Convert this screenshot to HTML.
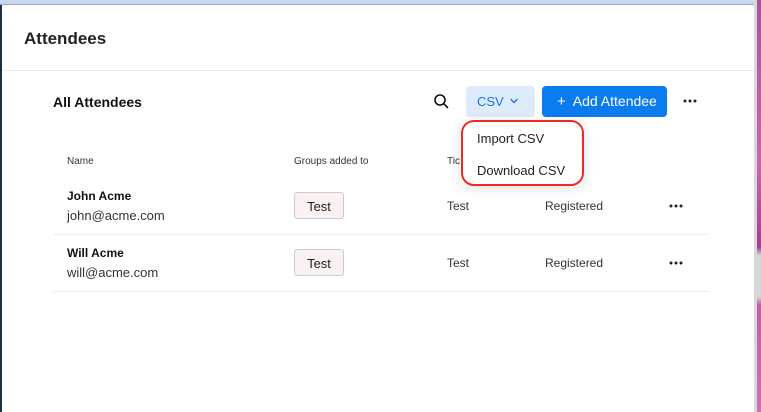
<!DOCTYPE html>
<html><head><meta charset="utf-8"><style>
*{box-sizing:border-box;margin:0;padding:0}
body{width:761px;height:412px;overflow:hidden;background:#fff;font-family:"Liberation Sans",sans-serif;position:relative;color:#1f2328}
.abs{position:absolute}
</style></head><body>
<div class="abs" style="left:0;top:0;width:761px;height:4px;background:#c9d8f0"></div>
<div class="abs" style="left:0;top:4px;width:761px;height:1px;background:#9aa6b8"></div>
<div class="abs" style="left:0;top:5px;width:2px;height:407px;background:#1c2f4a"></div>
<div class="abs" style="left:754px;top:0;width:3px;height:412px;background:#d8d8dc"></div>
<div class="abs" style="left:757px;top:0;width:4px;height:412px;background:linear-gradient(180deg,#b0509a,#c868a8 40%,#a83c8c 60%,#d7d7d7 62%,#d7d7d7 72%,#c060a0 74%,#d070b0)"></div>
<div class="abs" style="left:24px;top:29px;font-size:17px;font-weight:bold;color:#222">Attendees</div>
<div class="abs" style="left:2px;top:70px;width:752px;height:1px;background:#ececef"></div>
<div class="abs" style="left:53px;top:94px;font-size:14px;font-weight:bold;color:#111">All Attendees</div>
<svg class="abs" style="left:433px;top:93px" width="17" height="17" viewBox="0 0 17 17"><circle cx="7" cy="7" r="5" fill="none" stroke="#111" stroke-width="1.6"/><line x1="10.6" y1="10.6" x2="14.5" y2="14.5" stroke="#111" stroke-width="1.6" stroke-linecap="round"/></svg>
<div class="abs" style="left:466px;top:86px;width:69px;height:31px;background:#ddebfb;border-radius:4px;color:#1878e8;font-size:13px;padding:8px 0 0 11px">CSV</div>
<svg class="abs" style="left:509px;top:97px" width="10" height="8" viewBox="0 0 10 8"><path d="M1.5 2 L5 5.5 L8.5 2" fill="none" stroke="#1878e8" stroke-width="1.4"/></svg>
<div class="abs" style="left:542px;top:86px;width:125px;height:31px;background:#0b7bf0;border-radius:4px;color:#fff;font-size:14px;padding:7px 0 0 15px"><span style="font-size:15px">+</span>&nbsp; Add Attendee</div>
<svg class="abs" style="left:683px;top:99px" width="14" height="4"><circle cx="2" cy="2" r="1.5" fill="#222"/><circle cx="7" cy="2" r="1.5" fill="#222"/><circle cx="12" cy="2" r="1.5" fill="#222"/></svg>
<div class="abs" style="left:67px;top:156px;font-size:10px;color:#333">Name</div>
<div class="abs" style="left:294px;top:156px;font-size:10px;color:#333">Groups added to</div>
<div class="abs" style="left:447px;top:156px;font-size:10px;color:#333">Tick</div>
<div class="abs" style="left:67px;top:189px;font-size:12px;font-weight:bold;color:#111">John Acme</div>
<div class="abs" style="left:67px;top:208px;font-size:13px;color:#333">john@acme.com</div>
<div class="abs" style="left:294px;top:192px;width:50px;height:27px;border:1px solid #c6ccd8;background:#fcf1f1;border-radius:3px;font-size:13px;text-align:center;padding-top:6px;color:#222">Test</div>
<div class="abs" style="left:447px;top:199px;font-size:12px;color:#333">Test</div>
<div class="abs" style="left:545px;top:199px;font-size:12px;color:#333">Registered</div>
<svg class="abs" style="left:669px;top:204px" width="14" height="4"><circle cx="2" cy="2" r="1.5" fill="#222"/><circle cx="7" cy="2" r="1.5" fill="#222"/><circle cx="12" cy="2" r="1.5" fill="#222"/></svg>
<div class="abs" style="left:53px;top:234px;width:656px;height:1px;background:#eceef2"></div>
<div class="abs" style="left:67px;top:246px;font-size:12px;font-weight:bold;color:#111">Will Acme</div>
<div class="abs" style="left:67px;top:265px;font-size:13px;color:#333">will@acme.com</div>
<div class="abs" style="left:294px;top:249px;width:50px;height:27px;border:1px solid #c6ccd8;background:#fcf1f1;border-radius:3px;font-size:13px;text-align:center;padding-top:6px;color:#222">Test</div>
<div class="abs" style="left:447px;top:256px;font-size:12px;color:#333">Test</div>
<div class="abs" style="left:545px;top:256px;font-size:12px;color:#333">Registered</div>
<svg class="abs" style="left:669px;top:261px" width="14" height="4"><circle cx="2" cy="2" r="1.5" fill="#222"/><circle cx="7" cy="2" r="1.5" fill="#222"/><circle cx="12" cy="2" r="1.5" fill="#222"/></svg>
<div class="abs" style="left:53px;top:291px;width:656px;height:1px;background:#eceef2"></div>
<div class="abs" style="left:460px;top:121px;width:124px;height:65px;background:#fff;box-shadow:0 2px 12px rgba(0,0,0,0.12);border-radius:6px"></div>
<div class="abs" style="left:461px;top:120px;width:123px;height:66px;border:2.5px solid #f0281e;border-radius:13px"></div>
<div class="abs" style="left:477px;top:131px;font-size:13px;color:#222">Import CSV</div>
<div class="abs" style="left:477px;top:163px;font-size:13px;color:#222">Download CSV</div>
</body></html>
